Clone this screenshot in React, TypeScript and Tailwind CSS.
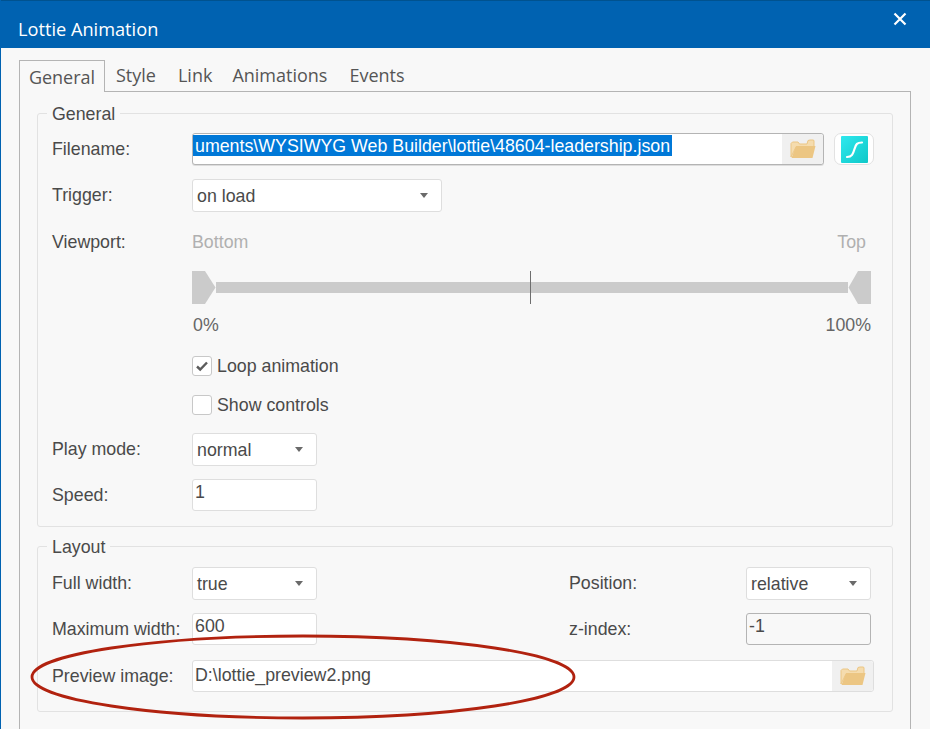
import type { ReactNode } from 'react'

const body = "font-['Liberation_Sans',Arial,sans-serif]"

function Folder() {
  return (
    <svg width="26" height="20" viewBox="0 0 26 20" className="shrink-0">
      <path d="M1 18V4.500L2.500 3H8l1.500 2H17l1-3.500L20 1h3.500l.5 1v6H6L1 18Z" fill="#f5dcae" stroke="#ecc683" strokeWidth="1" />
      <path d="M6 7h19.500L22.500 19H1.500L6 7Z" fill="#ecc683" />
    </svg>
  )
}

function Caret() {
  return <span className="w-0 h-0 border-x-[4px] border-x-transparent border-t-[5px] border-t-[#6a6a6a]" />
}

function Select({ value, width }: { value: string; width: string }) {
  return (
    <div className={`${width} h-[33px] flex items-center justify-between pl-1 pr-[13px] bg-white border border-[#dedede] rounded-[3px] text-[17.8px] text-[#4a4a4a]`}>
      <span className="mt-[2px]">{value}</span>
      <Caret />
    </div>
  )
}

function TextBox({ value, disabled }: { value: string; disabled?: boolean }) {
  return (
    <div className={`w-[125px] h-[32px] pl-[2px] leading-[25px] border rounded-[3px] text-[17.8px] text-[#4a4a4a] ${disabled ? 'bg-[#f8f8f8] border-[#b4b4b4]' : 'bg-white border-[#dedede]'}`}>
      {value}
    </div>
  )
}

function Row({ label, children, className }: { label: string; children: ReactNode; className?: string }) {
  return (
    <div className={`flex items-center ${className ?? ''}`}>
      <span className="w-[140px] shrink-0 text-[17.8px] text-[#4a4a4a]">{label}</span>
      {children}
    </div>
  )
}

function Check({ label, checked, className }: { label: string; checked?: boolean; className?: string }) {
  return (
    <div className={`flex items-center ml-[140px] gap-[5px] h-[21px] ${className ?? ''}`}>
      <span className="w-[20px] h-[20px] flex items-center justify-center bg-white border border-[#c8c8c8] rounded-[3px]">
        {checked && (
          <svg width="14" height="12" viewBox="0 0 14 12">
            <path d="M2 6.500 5.200 9.500 12 2.500" fill="none" stroke="#5c5c5c" strokeWidth="2.400" />
          </svg>
        )}
      </span>
      <span className="mt-[2px] text-[17.8px] text-[#4a4a4a]">{label}</span>
    </div>
  )
}

function Slider() {
  return (
    <div className="flex items-center relative w-[679px] h-[33px]">
      <svg width="24" height="33" viewBox="0 0 24 33" className="shrink-0">
        <path d="M0 0H13L23.500 16.500 13 33H0Z" fill="#cbcbcb" />
      </svg>
      <div className="flex-1 h-[11px] bg-[#cbcbcb]" />
      <svg width="23" height="33" viewBox="0 0 23 33" className="shrink-0">
        <path d="M23 0H10L.5 16.500 10 33H23Z" fill="#cbcbcb" />
      </svg>
      <span className="absolute left-[338px] top-0 w-px h-[33px] bg-[#6e6e6e]" />
    </div>
  )
}

function Group({ title, className, children }: { title: string; className?: string; children: ReactNode }) {
  return (
    <fieldset className={`border border-[#e2e2e2] rounded-[3px] pl-[14px] ${className ?? ''}`}>
      <legend className="-ml-[5px] px-[5px] translate-y-[1px] text-[17.8px] leading-[20px] text-[#4a4a4a]">{title}</legend>
      {children}
    </fieldset>
  )
}

export default function App() {
  return (
    <div className={`relative w-[930px] h-[729px] overflow-hidden bg-[#f8f8f8] border-l border-[#0062b1] ${body}`}>
      <header className="h-[48px] -ml-px flex items-center justify-between pl-[18px] pr-[23px] bg-[#0062b1] border-t border-[#00528f] text-white">
        <h1 className="font-['Open_Sans',sans-serif] text-[18.200px] mt-[11px]">Lottie Animation</h1>
        <svg width="14" height="14" viewBox="0 0 14 14" className="-mt-[12px]">
          <path d="M1.500 1.500 12.500 12.500M12.500 1.500 1.500 12.500" stroke="#fff" strokeWidth="2.200" />
        </svg>
      </header>

      <nav className="h-[43px] ml-[18px] mr-[19px] pt-[12px] flex items-end font-['Open_Sans',sans-serif] text-[18px] text-[#555]">
        <div className="relative z-10 w-[86px] h-[32px] -mb-px pt-[3px] text-center bg-[#f8f8f8] border border-b-0 border-[#b4b4b4]">General</div>
        <div className="h-[31px] pt-[2px] ml-[11px]">Style</div>
        <div className="h-[31px] pt-[2px] ml-[22px]">Link</div>
        <div className="h-[31px] pt-[2px] ml-[20px]">Animations</div>
        <div className="h-[31px] pt-[2px] ml-[22px]">Events</div>
      </nav>

      <main className="h-[700px] ml-[18px] mr-[19px] pl-[17px] pr-[17px] border border-[#b4b4b4]">
        <Group title="General" className="mt-[11px] h-[424px]">
          <Row label="Filename:" className="mt-[10px]">
            <div className="w-[632px] h-[32px] flex items-start justify-between bg-white border border-[#b4b4b4] rounded-[3px] shadow-[0_1px_0_#ddd]">
              <span className="mt-px h-[21px] px-[2px] leading-[23px] bg-[#0078d7] text-white text-[17.8px] whitespace-pre">uments\WYSIWYG Web Builder\lottie\48604-leadership.json</span>
              <span className="w-[41px] h-[30px] flex items-center justify-center bg-[#f0f0f0] rounded-r-[3px]">
                <Folder />
              </span>
            </div>
            <div className="ml-[10px] w-[40px] h-[32px] flex items-center justify-center bg-white border border-[#e2e2e2] rounded-[7px]">
              <svg width="27" height="27" viewBox="0 0 27 27">
                <defs>
                  <linearGradient id="aqua" x1="0" y1="0" x2="1" y2="1">
                    <stop offset="0" stopColor="#2ee8ee" />
                    <stop offset="1" stopColor="#0fc8c8" />
                  </linearGradient>
                </defs>
                <rect width="27" height="27" rx="1" fill="url(#aqua)" />
                <path d="M6 21c5 0 6-3 7.500-8C15 8 16 6.500 21 6.500" fill="none" stroke="#fff" strokeWidth="2.200" strokeLinecap="round" />
              </svg>
            </div>
          </Row>
          <Row label="Trigger:" className="mt-[14px]">
            <Select value="on load" width="w-[250px]" />
          </Row>
          <div className="flex mt-[20px] text-[17.8px] leading-[20px]">
            <span className="w-[140px] text-[#4a4a4a]">Viewport:</span>
            <div className="w-[679px] flex justify-between text-[#b0b0b0]">
              <span>Bottom</span>
              <span className="mr-[5px]">Top</span>
            </div>
          </div>
          <div className="ml-[140px] mt-[19px]">
            <Slider />
          </div>
          <div className="ml-[140px] w-[679px] mt-[11px] flex justify-between text-[17.8px] leading-[20px] text-[#666]">
            <span className="ml-px">0%</span>
            <span>100%</span>
          </div>
          <Check label="Loop animation" checked className="mt-[20px]" />
          <Check label="Show controls" className="mt-[18px]" />
          <Row label="Play mode:" className="mt-[18px]">
            <Select value="normal" width="w-[125px]" />
          </Row>
          <Row label="Speed:" className="mt-[13px]">
            <TextBox value="1" />
          </Row>
        </Group>

        <Group title="Layout" className="mt-[9px] h-[176px]">
          <div className="flex items-center mt-[11px]">
            <Row label="Full width:" className="w-[517px]">
              <Select value="true" width="w-[125px]" />
            </Row>
            <span className="w-[177px] text-[17.8px] text-[#4a4a4a]">Position:</span>
            <Select value="relative" width="w-[125px]" />
          </div>
          <div className="flex items-center mt-[13px]">
            <Row label="Maximum width:" className="w-[517px]">
              <TextBox value="600" />
            </Row>
            <span className="w-[177px] text-[17.8px] text-[#4a4a4a]">z-index:</span>
            <TextBox value="-1" disabled />
          </div>
          <Row label="Preview image:" className="mt-[15px]">
            <div className="w-[682px] h-[32px] flex items-center justify-between bg-white border border-[#dedede] rounded-[3px]">
              <span className="ml-[2px] -mt-[2px] text-[17.8px] text-[#4a4a4a]">D:\lottie_preview2.png</span>
              <span className="w-[41px] h-[30px] flex items-center justify-center bg-[#f0f0f0] rounded-r-[3px]">
                <Folder />
              </span>
            </div>
          </Row>
        </Group>
      </main>

      <svg width="560" height="100" viewBox="0 0 560 100" className="absolute left-[23px] top-[628px] pointer-events-none">
        <ellipse cx="279" cy="49" rx="271" ry="41" fill="none" stroke="#b1220f" strokeWidth="2.800" />
      </svg>
    </div>
  )
}
